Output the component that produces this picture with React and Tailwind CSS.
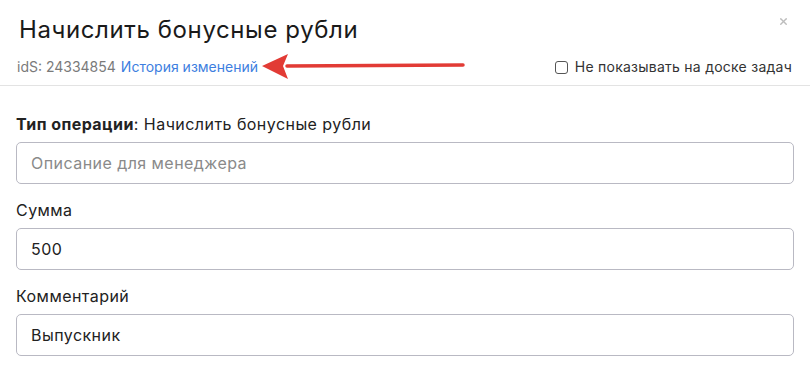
import { X } from 'lucide-react';

const Field = ({ label, value, placeholder }) => (
    <div className="mb-[14px]">
        {label && <div className="text-[16px] leading-6 text-[#222] mb-[6px] tracking-[0.45px]">{label}</div>}
        <div className="h-[42px] border border-[#b9b9c3] rounded-[5px] px-[14px] flex items-center text-[16px] tracking-[0.45px]">
            {value ? <span className="text-[#222]">{value}</span> : <span className="text-[#8a8a8a]">{placeholder}</span>}
        </div>
    </div>
);

const App = () => {
    return (
        <div className="w-[810px] h-[375px] bg-white overflow-hidden" style={{ fontFamily: 'Inter, "Noto Sans", sans-serif' }}>
            <div className="relative px-[19px] pt-[14px] pb-[8px] border-b border-[#e3e3e3]">
                <h1 className="text-[24px] leading-[32px] text-[#1a1a1a] font-normal tracking-[0.6px]">Начислить бонусные рубли</h1>
                <div className="mt-[11px] h-5 flex items-center justify-between text-[14px] leading-5">
                    <div className="flex items-center -ml-[2px]">
                        <span className="text-[#7a7a7a]">idS: 24334854</span>
                        <span className="ml-[5px] text-[#3d7ee0]">История изменений</span>
                        <svg width="206" height="28" viewBox="0 0 206 28" className="ml-[3px] -my-[4px]">
                            <path d="M26 13 L202 12" stroke="#e23b35" strokeWidth="3.5" strokeLinecap="round" />
                            <path d="M1 13 L27 1 L22 13 L27 26 Z" fill="#e23b35" />
                        </svg>
                    </div>
                    <label className="flex items-center text-[#333] -mr-[1px] tracking-[0.25px]">
                        <span className="w-[13px] h-[13px] border-[1.5px] border-[#555] rounded-[3px] mr-[7px] bg-white"></span>
                        Не показывать на доске задач
                    </label>
                </div>
                <X className="absolute right-[21px] top-[16px] w-[11px] h-[11px] text-[#bdbdbd]" strokeWidth={3} />
            </div>
            <div className="px-[16px] pt-[26px]">
                <Field
                    label={<><span className="font-bold">Тип операции</span>: Начислить бонусные рубли</>}
                    placeholder="Описание для менеджера"
                />
                <Field label="Сумма" value="500" />
                <Field label="Комментарий" value="Выпускник" />
            </div>
        </div>
    );
};

export default App;
